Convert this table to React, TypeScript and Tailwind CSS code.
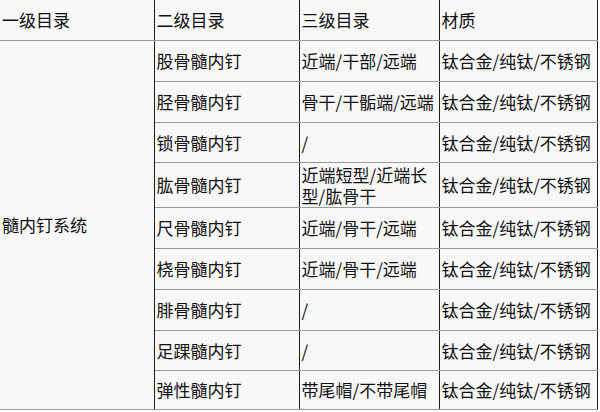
const rows = [
  { name: "股骨髓内钉", part: "近端/干部/远端", h: "h-[41px]" },
  { name: "胫骨髓内钉", part: "骨干/干骺端/远端", h: "h-[41px]" },
  { name: "锁骨髓内钉", part: "/", h: "h-[40px]" },
  { name: "肱骨髓内钉", part: "近端短型/近端长型/肱骨干", h: "h-[45px]" },
  { name: "尺骨髓内钉", part: "近端/骨干/远端", h: "h-[41px]" },
  { name: "桡骨髓内钉", part: "近端/骨干/远端", h: "h-[41px]" },
  { name: "腓骨髓内钉", part: "/", h: "h-[41px]" },
  { name: "足踝髓内钉", part: "/", h: "h-[40px]" },
  { name: "弹性髓内钉", part: "带尾帽/不带尾帽", h: "h-[39px]" },
];

const material = "钛合金/纯钛/不锈钢";

const cell = "border-b border-b-[#9a9a9a] border-r-[1.5px] border-r-[#1c1c1c] px-[2px] py-0 align-middle leading-[21px]";

export default function App() {
  return (
    <div className="min-h-[412px] w-[600px] bg-white font-['Noto_Sans_CJK_SC','Noto_Sans',sans-serif] text-[17px] text-[#111]">
      <table className="w-[597px] table-fixed border-collapse bg-[#f8f8f8]">
        <colgroup>
          <col className="w-[154px]" />
          <col className="w-[145px]" />
          <col className="w-[140px]" />
          <col className="w-[158px]" />
        </colgroup>
        <thead>
          <tr className="h-[40px] text-left">
            <th className={`${cell} font-normal`}>一级目录</th>
            <th className={`${cell} font-normal`}>二级目录</th>
            <th className={`${cell} font-normal`}>三级目录</th>
            <th className={`${cell} font-normal`}>材质</th>
          </tr>
        </thead>
        <tbody>
          {rows.map((r, i) => (
            <tr key={r.name} className={r.h}>
              {i === 0 ? (
                <td rowSpan={rows.length} className={cell}>
                  髓内钉系统
                </td>
              ) : null}
              <td className={cell}>{r.name}</td>
              <td className={`${cell} break-all`}>{r.part}</td>
              <td className={`${cell} whitespace-nowrap`}>{material}</td>
            </tr>
          ))}
        </tbody>
      </table>
    </div>
  );
}
